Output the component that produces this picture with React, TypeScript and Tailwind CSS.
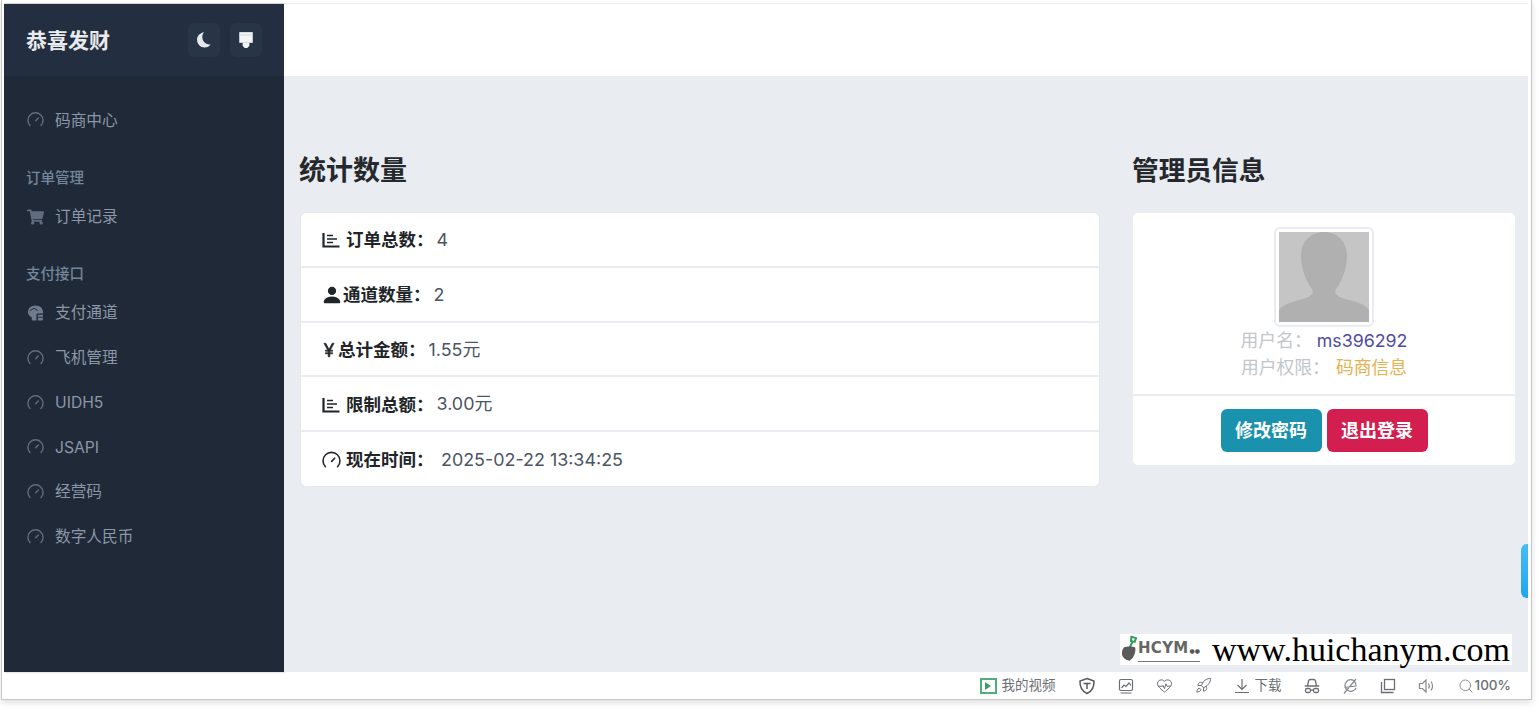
import { HeartPulse, Rocket, Search } from "lucide-react";
import { BsCurrencyYen, BsPersonFill } from "react-icons/bs";
import { FaShoppingCart } from "react-icons/fa";

const cjk = "font-['Inter','Noto_Sans_CJK_SC',sans-serif]";

function Gauge({ className }: { className?: string }) {
  return (
    <svg viewBox="0 0 18 18" fill="none" stroke="currentColor" strokeWidth="1.5" strokeLinecap="round" className={className}>
      <path d="M3.2 14.800A8 8 0 1 1 14.800 14.800" />
      <path d="M9.200 9.800 12 6.800" />
    </svg>
  );
}

function ChartIcon() {
  return (
    <svg viewBox="0 0 18 18" fill="none" stroke="currentColor" className="mr-[6px] h-[18px] w-[18px]">
      <path d="M1.500 2v13.500H17.500" strokeWidth="2.200" />
      <path d="M5 4.500h6M5 8h10M5 11.500h6" strokeWidth="1.700" />
    </svg>
  );
}

function HelmetIcon() {
  return (
    <svg viewBox="0 0 18 18" className="h-[18px] w-[18px] text-[#6d7b8d]" fill="currentColor">
      <path d="M9 1c4.600 0 8 2.900 8 7v1.400H11.600c-1 0-1.600.6-1.600 1.600v6H6.500C5.500 17 5 16.400 5 15.600v-2C2.600 12.600 1 10.600 1 8c0-4.100 3.400-7 8-7Z" />
      <path d="M11.500 10.800H17V15c0 1.200-.8 2-2 2h-3.500Z" />
      <path d="M3 6.500 7.500 4l4 2.500" fill="none" stroke="#1f2937" strokeWidth="1" />
      <path d="M11.500 13.500H17" stroke="#1f2937" strokeWidth="1" />
    </svg>
  );
}

function NavItem({ label, icon }: { label: string; icon?: React.ReactNode }) {
  return (
    <div className="flex h-[44.8px] items-center pl-[23px] text-[15.7px] text-[#8b97a7]">
      <span className="mr-[11px] flex w-[17px] justify-center">
        {icon ?? <Gauge className="h-[18px] w-[18px] text-[#5f6d7f]" />}
      </span>
      {label}
    </div>
  );
}

function StatRow({ icon, label, value, last, wide }: { icon: React.ReactNode; label: string; value: string; last?: boolean; wide?: boolean }) {
  return (
    <div className={`flex items-center pl-[21px] pt-[2px] text-[17.5px] text-[#212529] ${last ? "h-[54px]" : "h-[54.8px] border-b-2 border-[#e9ecf1]"}`}>
      {icon}
      <span className="font-bold">{label}</span>
      <span className={`text-[17.9px] text-[#4b5563] ${wide ? "ml-[7.5px]" : "ml-[3px]"}`}>{value}</span>
    </div>
  );
}

export default function App() {
  return (
    <div className={`relative h-[711px] w-[1539px] overflow-hidden bg-white ${cjk}`}>
      <div className="relative ml-px flex h-[700px] w-[1531px] flex-col border-x border-b border-[#c6c6c6] bg-white pl-[2px] pr-[3px] pt-[3px] shadow-[0_3px_6px_rgba(0,0,0,0.12)]">

        {/* PAGE */}
        <div className="flex h-[669px] border-t border-[#ececec]">

          {/* SIDEBAR */}
          <aside className="flex w-[280px] shrink-0 flex-col bg-[#1f2937] shadow-[1px_0_2px_rgba(0,0,0,0.3)]">
            <div className="flex h-[72px] items-center justify-between bg-[#232f40] pl-[22px] pr-[22px]">
              <h1 className="pt-[2px] text-[21px] font-bold text-[#e8eaee]">恭喜发财</h1>
              <div className="flex gap-[10px]">
                <button className="flex h-[34px] w-[32px] items-center justify-center rounded-md bg-[#283547]">
                  <svg viewBox="0 0 16 16" className="h-[18px] w-[18px]" fill="#e5e7eb">
                    <path d="M8 1C4.400 1.500 1.800 4.300 1.800 7.800c0 3.800 3 6.900 6.800 6.900 2.300 0 4.300-1.100 5.500-2.900-.6.2-1.300.2-1.900.1C9.200 11.500 6.800 9 6.500 6 6.300 4.100 6.900 2.300 8 1Z" />
                  </svg>
                </button>
                <button className="flex h-[34px] w-[32px] items-center justify-center rounded-md bg-[#283547]">
                  <svg viewBox="0 0 16 16" className="h-[18px] w-[18px]" fill="#f3f4f6">
                    <path d="M2 1h12v9.500H2Z" />
                    <path d="M5 10.500h6V13L9.200 15H6.800L5 13Z" />
                    <path d="M2 3.500h12" stroke="#cfd3d8" strokeWidth="0.8" />
                  </svg>
                </button>
              </div>
            </div>

            <nav className="pt-[22px]">
              <NavItem label="码商中心" />
              <p className="mt-[22px] h-[30px] pl-[22px] text-[14.5px] font-medium leading-[26px] text-[#76869b]">订单管理</p>
              <NavItem label="订单记录" icon={<FaShoppingCart className="h-[16px] w-[18px] text-[#5f6d7f]" />} />
              <p className="mt-[22px] h-[29px] pl-[22px] text-[14.5px] font-medium leading-[23px] text-[#76869b]">支付接口</p>
              <NavItem label="支付通道" icon={<HelmetIcon />} />
              <NavItem label="飞机管理" />
              <NavItem label="UIDH5" />
              <NavItem label="JSAPI" />
              <NavItem label="经营码" />
              <NavItem label="数字人民币" />
            </nav>
          </aside>

          {/* MAIN */}
          <main className="flex min-w-0 flex-1 flex-col">
            <div className="h-[72px] shrink-0 bg-white" />
            <div className="flex flex-1 gap-8 bg-[#e9ecf1] pl-4 pr-3 pt-[75px]">

              <section className="w-[800px]">
                <h2 className="-ml-px mb-[21px] h-[40px] text-[27px] font-bold leading-[40px] text-[#25282c]">统计数量</h2>
                <div className="rounded-md border border-[#e4e7ec] bg-white">
                  <StatRow icon={<ChartIcon />} label="订单总数：" value="4" />
                  <StatRow icon={<BsPersonFill className="-ml-[1px] h-[22px] w-[22px]" />} label="通道数量：" value="2" />
                  <StatRow icon={<BsCurrencyYen className="-ml-[2px] h-[18px] w-[18px]" stroke="currentColor" strokeWidth={0.6} />} label="总计金额：" value="1.55元" />
                  <StatRow icon={<ChartIcon />} label="限制总额：" value="3.00元" />
                  <StatRow icon={<Gauge className="mr-[5px] h-[19px] w-[19px]" />} label="现在时间：" value="2025-02-22 13:34:25" last wide />
                </div>
              </section>

              <section className="w-[384px]">
                <h2 className="mb-[21px] h-[40px] text-[26.7px] font-bold leading-[39px] text-[#25282c]">管理员信息</h2>
                <div className="rounded-md border border-[#e9ecf1] bg-white">
                  <div className="flex h-[183px] flex-col items-center border-b-2 border-[#e9ecf1] pt-[14px]">
                    <div className="h-[100px] w-[100px] rounded-md border-2 border-[#e9ecf1] p-[3px]">
                      <svg viewBox="0 0 90 90" className="h-[90px] w-[90px] bg-[#c5c5c5]">
                        <path
                          d="M45 0c13 0 23 9 23 24 0 15-7 28-11 33-2 4 1 7 6 9 8 3 20 3 27 12v12H0V78c6-8 19-9 27-12 5-2 8-5 6-9C29 52 22 39 22 24 22 9 32 0 45 0Z"
                          fill="#b0b0b0"
                        />
                      </svg>
                    </div>
                    <p className="h-[27px] text-[17.8px] leading-[27px] text-[#c1c6cb]">
                      用户名：<span className="ml-[5px] text-[#4f4ba3]">ms396292</span>
                    </p>
                    <p className="h-[27px] text-[17.8px] leading-[27px] text-[#c1c6cb]">
                      用户权限：<span className="ml-[6px] text-[#e6b24f]">码商信息</span>
                    </p>
                  </div>
                  <div className="flex h-[69px] justify-center gap-[5px] pt-[13px]">
                    <button className="h-[43px] w-[101px] rounded-md bg-[#1a92ad] text-[18px] font-bold text-white">修改密码</button>
                    <button className="h-[43px] w-[101px] rounded-md bg-[#d31f4f] text-[18px] font-bold text-white">退出登录</button>
                  </div>
                </div>
              </section>

            </div>
          </main>
        </div>

        {/* BROWSER STATUS BAR */}
        <footer className="flex flex-1 items-center justify-end gap-[22px] pr-[17px] text-[13.5px] text-[#6b6f75]">
          <div className="flex items-center gap-[5px]">
            <span className="flex h-[16px] w-[17px] items-center justify-center border-2 border-[#4fae7c]">
              <span className="h-0 w-0 border-y-[4px] border-l-[6px] border-y-transparent border-l-[#3d9c6b]" />
            </span>
            我的视频
          </div>
          <svg viewBox="0 0 18 18" className="h-[18px] w-[18px]" fill="none" stroke="#55595f" strokeWidth="1.500">
            <path d="M9 1.500 16 4c.3 6-1.500 10-7 12.500C3.500 14 1.700 10 2 4Z" />
            <path d="M5.500 6.500h7M9 6.500V12" />
          </svg>
          <svg viewBox="0 0 16 16" className="h-[16px] w-[16px]" fill="none" stroke="#6b6f75" strokeWidth="1.200">
            <rect x="1.500" y="1.500" width="13" height="11" rx="1.500" />
            <path d="M3.500 10 6 7l2 1.500L11 5l2 2.500M2.500 15h11" />
          </svg>
          <HeartPulse className="h-[17px] w-[17px]" strokeWidth={1.400} />
          <Rocket className="h-[17px] w-[17px]" strokeWidth={1.400} />
          <div className="flex items-center gap-[5px]">
            <svg viewBox="0 0 16 16" className="h-[16px] w-[16px]" fill="none" stroke="#6b6f75" strokeWidth="1.200">
              <path d="M8 1v10M3.500 7 8 11.500 12.500 7M1 14.500h14" />
            </svg>
            下载
          </div>
          <svg viewBox="0 0 16 16" className="h-[16px] w-[16px]" fill="none" stroke="#6b6f75" strokeWidth="1.300">
            <path d="M3.500 8 4.500 3c.2-1 1-1.500 2-1.500h3c1 0 1.800.5 2 1.500l1 5M.8 8h14.400" />
            <rect x="1.500" y="10.500" width="5" height="4" rx="1.500" />
            <rect x="9.500" y="10.500" width="5" height="4" rx="1.500" />
            <path d="M6.500 12h3" />
          </svg>
          <svg viewBox="0 0 16 16" className="h-[16px] w-[16px]" fill="none" stroke="#85898f" strokeWidth="1.200">
            <path d="M13 3.500A5.800 5.800 0 1 0 14 10M2.500 9.500 14 8c0-2-.5-3.500-1.500-4.500M2 15.500 14 1" />
          </svg>
          <svg viewBox="0 0 16 16" className="h-[16px] w-[16px]" fill="none" stroke="#6b6f75" strokeWidth="1.300">
            <rect x="4.500" y="1.500" width="10" height="10" />
            <path d="M1.500 4v10.500h12" />
          </svg>
          <svg viewBox="0 0 16 16" className="h-[16px] w-[16px]" fill="none" stroke="#85898f" strokeWidth="1.200">
            <path d="M1.500 5.500h3L8 2v12L4.500 10.500h-3Z" />
            <path d="M10.500 5.500c1 1.500 1 3.500 0 5M13 3.500c2 2.500 2 6.500 0 9" />
          </svg>
          <div className="ml-[2px] flex items-center gap-[1px]">
            <Search className="h-[16px] w-[16px] text-[#85898f]" strokeWidth={1.400} />
            <span className="font-medium">100%</span>
          </div>
        </footer>
      </div>

      {/* SIDE TAB */}
      <div className="absolute left-[1521px] top-[544px] h-[54px] w-[7px] rounded-l-md bg-gradient-to-b from-[#45bdf2] to-[#1ea5ee]" />

      {/* WATERMARK */}
      <div className="absolute left-[1120px] top-[634px] flex h-[31px] w-[392px] items-center bg-white">
        <svg viewBox="0 0 18 30" className="ml-[1px] h-[29px] w-[17px] shrink-0" fill="none">
          <path d="M8 16 12 7" stroke="#2f9e5b" strokeWidth="2.200" />
          <path d="M10.500 6 11 1.500l5 1.500-1.500 4Z" stroke="#2f9e5b" strokeWidth="2" />
          <path d="M3 13c3-1.500 9-1.500 12 0 1 4-1 11-6 14C4 26 1 23 1 19c0-2.500 .8-4.500 2-6Z" fill="#5a5a5a" />
        </svg>
        <span className="shrink-0 whitespace-nowrap border-b border-[#777] font-['DejaVu_Sans',sans-serif] text-[15px] font-bold leading-[20px] tracking-[0.3px] text-[#666]">
          HCYM<span className="ml-[1px] text-[6px] tracking-normal text-[#555]">●●</span>
        </span>
        <span className="ml-auto whitespace-nowrap pr-[2px] font-['Liberation_Serif',serif] text-[34px] leading-[30px] text-black">www.huichanym.com</span>
      </div>
    </div>
  );
}
